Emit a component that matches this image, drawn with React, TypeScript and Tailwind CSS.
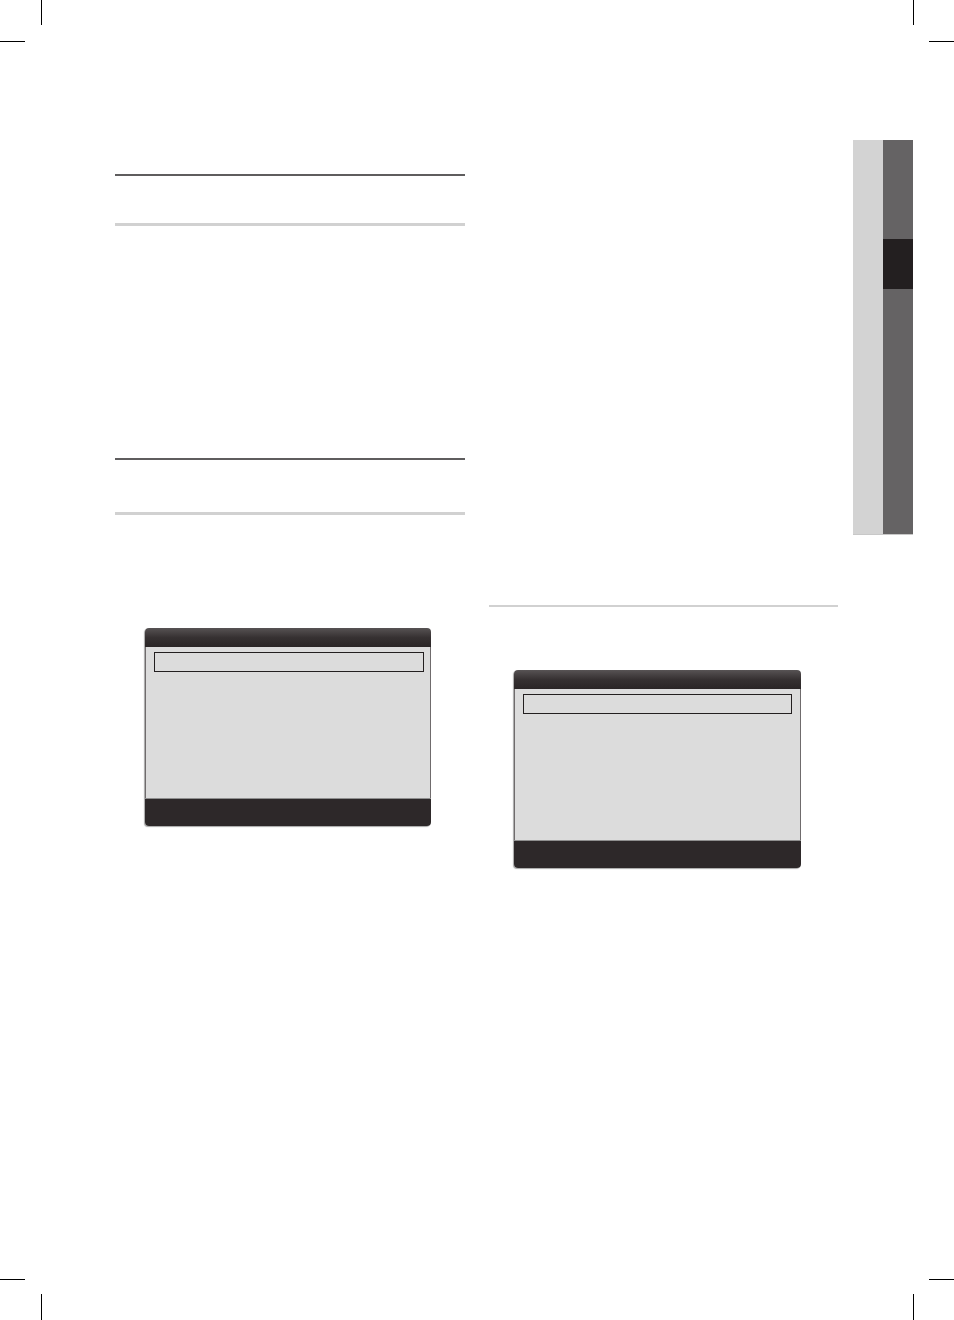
const CropMarks = () => (
  <>
    <div className="absolute left-[41px] top-0 h-[25px] w-px bg-black" />
    <div className="absolute left-0 top-[41px] h-px w-[25px] bg-black" />
    <div className="absolute left-[913px] top-0 h-[25px] w-px bg-black" />
    <div className="absolute left-[929px] top-[41px] h-px w-[25px] bg-black" />
    <div className="absolute left-0 top-[1279px] h-px w-[25px] bg-black" />
    <div className="absolute left-[41px] top-[1294px] h-[26px] w-px bg-black" />
    <div className="absolute left-[929px] top-[1279px] h-px w-[25px] bg-black" />
    <div className="absolute left-[913px] top-[1294px] h-[26px] w-px bg-black" />
  </>
)

const MenuBox = ({ width, padRight }: { width: string; padRight: string }) => (
  <div className={`${width} flex flex-col overflow-hidden rounded-[4px] shadow-[-1px_1px_1px_rgba(0,0,0,0.35)]`}>
    <div className="h-[19px] bg-gradient-to-b from-[#575354] via-[#363132] to-[#2a2526]" />
    <div className={`${padRight} flex h-[151px] flex-col border-x border-[#6f6b6c] bg-[#dcdcdc] pl-[8px] pt-[5px]`}>
      <div className="h-[20px] border-[1.5px] border-[#231f20]" />
    </div>
    <div className="h-[28px] border-t border-[#8f8f8f] bg-[#2d2829]" />
  </div>
)

export default function App() {
  return (
    <div className="relative h-[1320px] w-[954px] overflow-hidden bg-white" style={{ fontFamily: '"Liberation Sans", sans-serif' }}>
      <CropMarks />
      <div className="flex pl-[115px] pt-[140px]">
        <div className="flex w-[350px] flex-col">
          <div className="mt-[34px] h-[2px] bg-[#5f5d5e]" />
          <div className="mt-[47px] h-[3px] bg-[#d1d1d1]" />
          <div className="mt-[232px] h-[2px] bg-[#5f5d5e]" />
          <div className="mt-[52px] h-[3px] bg-[#d1d1d1]" />
          <div className="mt-[113px] pl-[30px]">
            <MenuBox width="w-[286px]" padRight="pr-[6px]" />
          </div>
        </div>
        <div className="ml-[24px] flex w-[349px] flex-col">
          <div className="mt-[465px] h-[2px] bg-[#d1d1d1]" />
          <div className="mt-[63px] pl-[25px]">
            <MenuBox width="w-[287px]" padRight="pr-[8px]" />
          </div>
        </div>
        <div className="ml-[15px] flex h-[395px] w-[60px] border-b border-[#c8c8c8]">
          <div className="w-[30px] bg-[#d3d3d3]" />
          <div className="flex w-[30px] flex-col bg-[#656364]">
            <div className="mt-[99px] h-[50px] bg-[#231f20]" />
          </div>
        </div>
      </div>
    </div>
  )
}
